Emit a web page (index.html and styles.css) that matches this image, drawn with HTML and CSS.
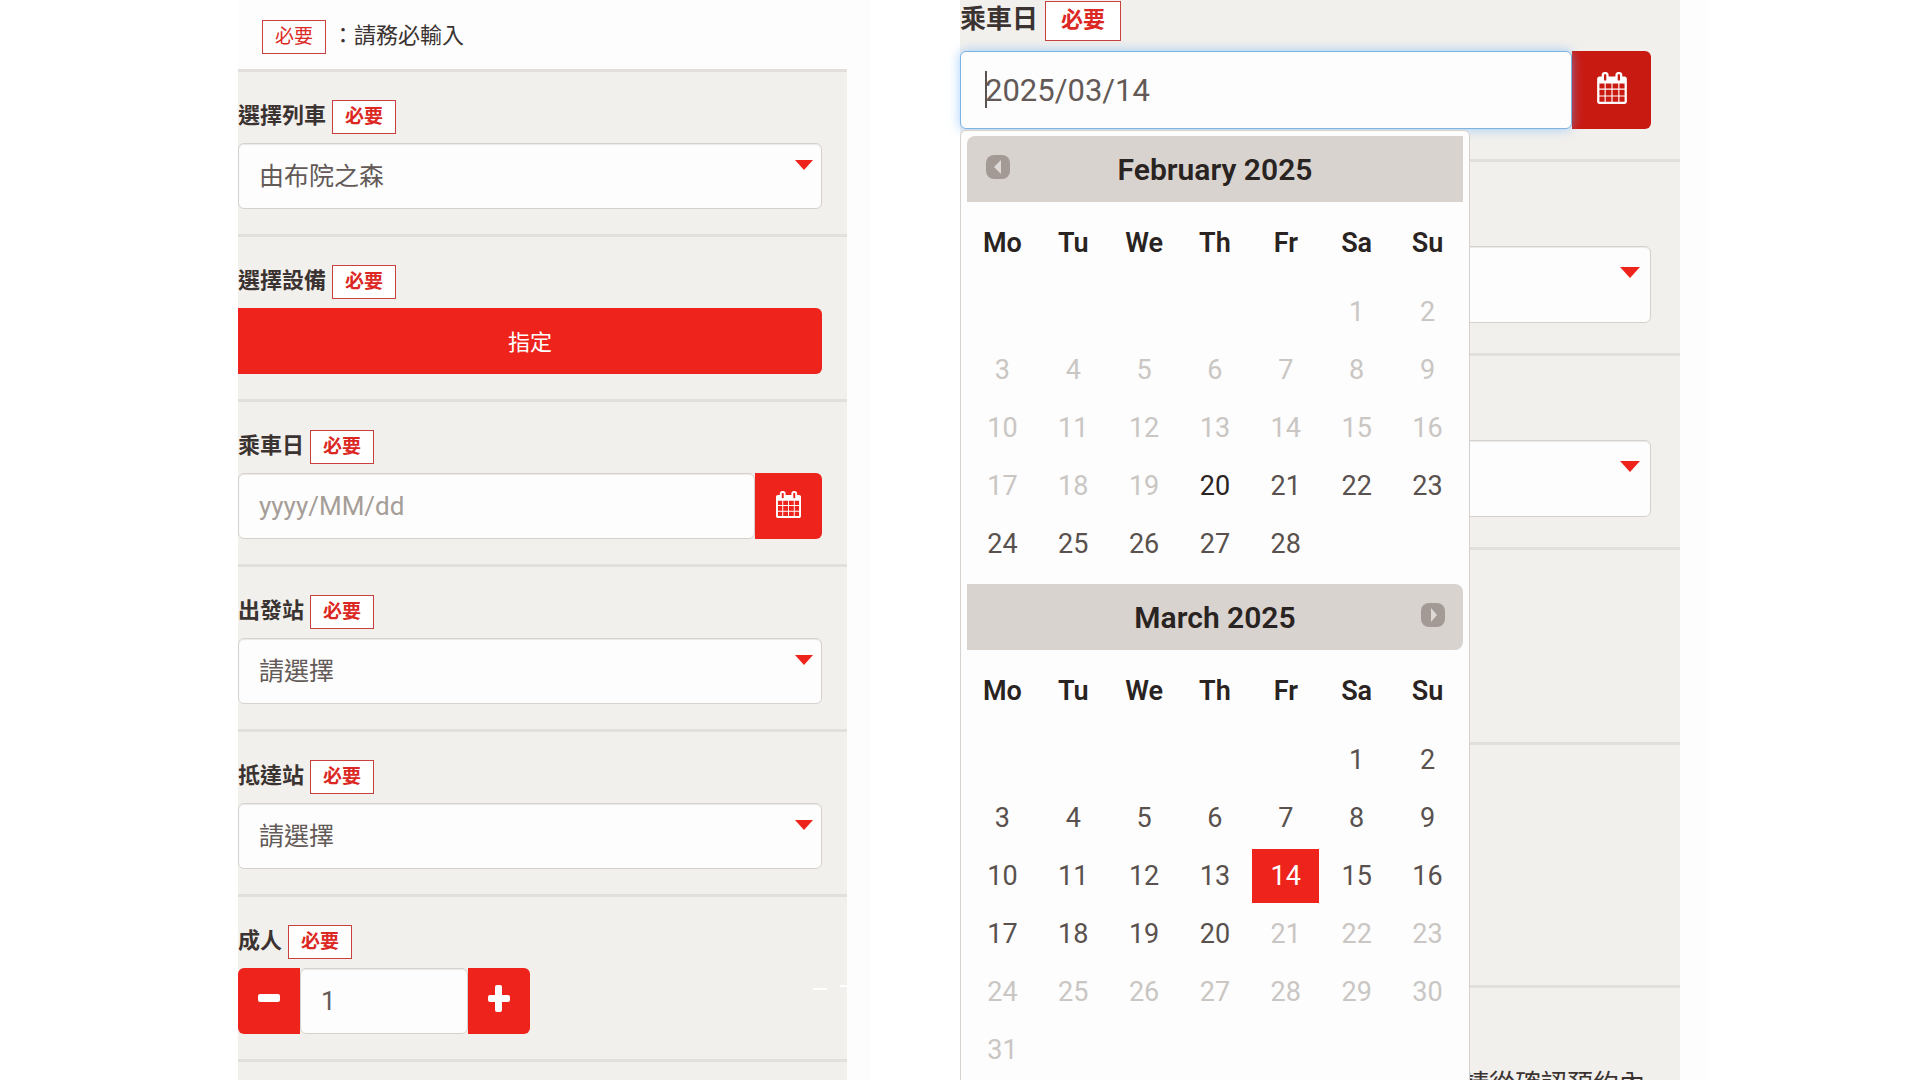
FILE: index.html
```
<!DOCTYPE html>
<html lang="zh-Hant">
<head>
<meta charset="utf-8">
<title>列車預約</title>
<link rel="stylesheet" href="styles.css">
</head>
<body>
<svg width="0" height="0" class="defs" aria-hidden="true">
  <symbol id="calendar" viewBox="64 0 1664 1792">
    <path d="M192 1664h288v-288h-288v288zm352 0h320v-288h-320v288zm-352-352h288v-320h-288v320zm352 0h320v-320h-320v320zm-352-384h288v-288h-288v288zm736 736h320v-288h-320v288zm-384-736h320v-288h-320v288zm768 736h288v-288h-288v288zm-384-352h320v-320h-320v320zm-352-864v-288q0-13-9.500-22.500t-22.500-9.500h-64q-13 0-22.500 9.500t-9.500 22.500v288q0 13 9.500 22.500t22.500 9.500h64q13 0 22.500-9.500t9.500-22.500zm736 864h288v-320h-288v320zm-384-384h320v-288h-320v288zm384 0h288v-288h-288v288zm32-480v-288q0-13-9.500-22.500t-22.500-9.500h-64q-13 0-22.500 9.500t-9.500 22.500v288q0 13 9.500 22.500t22.500 9.500h64q13 0 22.500-9.500t9.500-22.500zm384-64v1280q0 52-38 90t-90 38h-1408q-52 0-90-38t-38-90v-1280q0-52 38-90t90-38h128v-96q0-66 47-113t113-47h64q66 0 113 47t47 113v96h384v-96q0-66 47-113t113-47h64q66 0 113 47t47 113v96h128q52 0 90 38t38 90z"/>
  </symbol>
</svg>
<main class="page">
  <form class="screen screen-form">
    <p class="note"><span class="badge">必要</span><span>：請務必輸入</span></p>
    <div class="field">
      <div class="label-row"><label for="train">選擇列車</label><span class="badge">必要</span></div>
      <div class="select"><select id="train"><option>由布院之森</option></select></div>
    </div>
    <div class="field">
      <div class="label-row"><label for="seat">選擇設備</label><span class="badge">必要</span></div>
      <button type="button" id="seat" class="btn btn-wide">指定</button>
    </div>
    <div class="field">
      <div class="label-row"><label for="date">乘車日</label><span class="badge">必要</span></div>
      <div class="group">
        <input id="date" class="text" type="text" placeholder="yyyy/MM/dd">
        <button type="button" class="btn btn-date" aria-label="日曆"><svg class="icon"><use href="#calendar"/></svg></button>
      </div>
    </div>
    <div class="field">
      <div class="label-row"><label for="from">出發站</label><span class="badge">必要</span></div>
      <div class="select"><select id="from"><option>請選擇</option></select></div>
    </div>
    <div class="field">
      <div class="label-row"><label for="to">抵達站</label><span class="badge">必要</span></div>
      <div class="select"><select id="to"><option>請選擇</option></select></div>
    </div>
    <div class="field">
      <div class="label-row"><label for="adult">成人</label><span class="badge">必要</span></div>
      <div class="group stepper">
        <button type="button" class="btn btn-step btn-minus" aria-label="減少"><svg class="sign" viewBox="0 0 22 28"><rect y="10" width="22" height="8" rx="2"/></svg></button>
        <input id="adult" class="text" type="text" value="1">
        <button type="button" class="btn btn-step" aria-label="增加"><svg class="sign" viewBox="0 0 22 28"><rect y="11" width="22" height="7" rx="2"/><rect x="7" y="1" width="7" height="27" rx="2"/></svg></button>
      </div>
      <svg class="marks" viewBox="0 0 36 6" aria-hidden="true"><path d="M0 4h14v2H0zM27 1h9v2h-9z"/></svg>
    </div>
    <div class="field"></div>
  </form>

  <form class="screen screen-date">
    <div class="field first">
      <div class="label-row"><label for="ride">乘車日</label><span class="badge">必要</span></div>
      <div class="group">
        <input id="ride" class="text focused" type="text" value="2025/03/14"><span class="caret"></span>
        <button type="button" class="btn btn-date active" aria-label="日曆"><svg class="icon"><use href="#calendar"/></svg></button>
        <div class="picker">
          <div class="month-head month-first">
            <button type="button" class="nav nav-prev" aria-label="上個月"><svg viewBox="0 0 24 24"><rect width="24" height="24" rx="8"/><path d="M15 5v14L8 12z"/></svg></button>
            <span>February 2025</span>
          </div>
          <table class="month">
            <thead><tr><th>Mo</th><th>Tu</th><th>We</th><th>Th</th><th>Fr</th><th>Sa</th><th>Su</th></tr></thead>
            <tbody>
              <tr><td></td><td></td><td></td><td></td><td></td><td><span>1</span></td><td><span>2</span></td></tr>
              <tr><td><span>3</span></td><td><span>4</span></td><td><span>5</span></td><td><span>6</span></td><td><span>7</span></td><td><span>8</span></td><td><span>9</span></td></tr>
              <tr><td><span>10</span></td><td><span>11</span></td><td><span>12</span></td><td><span>13</span></td><td><span>14</span></td><td><span>15</span></td><td><span>16</span></td></tr>
              <tr><td><span>17</span></td><td><span>18</span></td><td><span>19</span></td><td><a href="#" class="today">20</a></td><td><a href="#">21</a></td><td><a href="#">22</a></td><td><a href="#">23</a></td></tr>
              <tr><td><a href="#">24</a></td><td><a href="#">25</a></td><td><a href="#">26</a></td><td><a href="#">27</a></td><td><a href="#">28</a></td><td></td><td></td></tr>
            </tbody>
          </table>
          <div class="month-head month-last">
            <span>March 2025</span>
            <button type="button" class="nav nav-next" aria-label="下個月"><svg viewBox="0 0 24 24"><rect width="24" height="24" rx="8"/><path d="M10 5v14l6-7z"/></svg></button>
          </div>
          <table class="month">
            <thead><tr><th>Mo</th><th>Tu</th><th>We</th><th>Th</th><th>Fr</th><th>Sa</th><th>Su</th></tr></thead>
            <tbody>
              <tr><td></td><td></td><td></td><td></td><td></td><td><a href="#">1</a></td><td><a href="#">2</a></td></tr>
              <tr><td><a href="#">3</a></td><td><a href="#">4</a></td><td><a href="#">5</a></td><td><a href="#">6</a></td><td><a href="#">7</a></td><td><a href="#">8</a></td><td><a href="#">9</a></td></tr>
              <tr><td><a href="#">10</a></td><td><a href="#">11</a></td><td><a href="#">12</a></td><td><a href="#">13</a></td><td><a href="#" class="selected">14</a></td><td><a href="#">15</a></td><td><a href="#">16</a></td></tr>
              <tr><td><a href="#">17</a></td><td><a href="#">18</a></td><td><a href="#">19</a></td><td><a href="#">20</a></td><td><span>21</span></td><td><span>22</span></td><td><span>23</span></td></tr>
              <tr><td><span>24</span></td><td><span>25</span></td><td><span>26</span></td><td><span>27</span></td><td><span>28</span></td><td><span>29</span></td><td><span>30</span></td></tr>
              <tr><td><span>31</span></td><td></td><td></td><td></td><td></td><td></td><td></td></tr>
            </tbody>
          </table>
        </div>
      </div>
    </div>
    <div class="field unlabeled"><div class="select"><select aria-label="出發站"></select></div></div>
    <div class="field unlabeled"><div class="select"><select aria-label="抵達站"></select></div></div>
    <div class="field short"></div>
    <div class="field tall"></div>
    <div class="field closing"><p>請從確認預約內</p></div>
  </form>
</main>
</body>
</html>
```
FILE: styles.css
```
* { box-sizing: border-box; }

body {
  margin: 0;
  background: #fff;
  color: #3b3331;
  font-family: Roboto, "Noto Sans CJK TC", sans-serif;
}

p { margin: 0; }

button, input, select { font: inherit; margin: 0; }

.defs { position: absolute; }

.page {
  display: grid;
  grid-template-columns: 238fr 632fr 90fr 748fr 212fr;
  height: 100vh;
  overflow: hidden;
}

/* Each screen sets its own scale */
.screen {
  display: flex;
  flex-direction: column;
  background: #fdfdfd;
}

.screen-form {
  --label: 22px;
  --label-line: 32px;
  --tag: 19px;
  --tag-w: 64px;
  --tag-h: 34px;
  --text: 26px;
  --option: 25px;
  --control: 66px;
  --pad: 20px;
  --side: 67px;
  grid-column: 2;
  padding-right: 23px;
}

.screen-date {
  --label: 26px;
  --label-line: 36px;
  --tag: 22px;
  --tag-w: 76px;
  --tag-h: 40px;
  --text: 31px;
  --option: 30px;
  --control: 77px;
  --pad: 24px;
  --side: 79px;
  grid-column: 4;
  padding-right: 28px;
}

.note {
  display: flex;
  gap: 6px;
  height: 69px;
  padding: 20px 0 0 24px;
  font-size: var(--label);
  line-height: var(--label-line);
}

.badge {
  display: flex;
  align-items: center;
  justify-content: center;
  width: var(--tag-w);
  height: var(--tag-h);
  padding-bottom: 2px;
  border: 1px solid #c9403c;
  background: #fff;
  color: #dc2823;
  font-size: var(--tag);
  line-height: 1;
}

.note .badge { background: #fdfdfd; }

.field {
  position: relative;
  flex: none;
  padding: 28px 25px 25px 0;
  border-top: 3px solid #e2dfdc;
  background: #f2f0ec;
}

.field:last-child { flex: 1; }

.label-row {
  display: flex;
  gap: 6px;
  height: 43px;
  font-size: var(--label);
  font-weight: 700;
  line-height: var(--label-line);
}

.select, .group {
  position: relative;
  display: flex;
}

.select::after {
  content: "";
  position: absolute;
  top: 17px;
  right: 9px;
  border: 9px solid transparent;
  border-top: 10px solid #ee231c;
  border-bottom: 0;
}

select, .text {
  width: 100%;
  min-width: 0;
  height: var(--control);
  padding: 0 var(--pad);
  border: 1px solid #d6d1cd;
  border-radius: 6px;
  outline: 0;
  background: #fdfdfd;
  box-shadow: inset 0 1px 1px rgba(0, 0, 0, .08);
  color: #635a57;
  font-size: var(--option);
  appearance: none;
}

.text {
  flex: 1;
  font-size: var(--text);
}

.text::placeholder { color: #a59d98; opacity: 1; }

.btn {
  display: flex;
  align-items: center;
  justify-content: center;
  flex: none;
  height: var(--control);
  padding: 0;
  border: 0;
  background: #ee241c;
  color: #fff;
}

.btn-wide {
  width: 100%;
  padding-bottom: 3px;
  border-radius: 0 6px 6px 0;
  font-size: var(--label);
}

.btn-date {
  width: var(--side);
  border-radius: 0 6px 6px 0;
}

.icon { width: 25px; height: 27px; fill: #fff; margin-bottom: 4px; }

.stepper { width: 292px; }

.btn-step { width: 62px; border-radius: 0 6px 6px 0; }

.btn-minus { border-radius: 6px 0 0 6px; }

.sign { width: 22px; height: 28px; margin-bottom: 6px; fill: #fff; }

.marks {
  position: absolute;
  right: -2px;
  bottom: 69px;
  width: 36px;
  height: 6px;
  fill: #fff;
}

/* Date screen */
.screen-date .field { padding: 84px 29px 30px 0; }

.screen-date .first {
  z-index: 1;
  padding-top: 1px;
  border-top: 0;
}

.screen-date .label-row {
  gap: 7px;
  height: 50px;
}

.screen-date .field.short { padding: 192px 0 0; }

.screen-date .field.tall { padding: 240px 0 0; }

.screen-date .field.closing {
  padding: 78px 35px 0 0;
  font-size: var(--label);
  line-height: 36px;
  text-align: right;
}

.screen-date .group { height: 78px; }

.screen-date .group .text, .screen-date .group .btn-date { height: 78px; }

.screen-date .select::after {
  top: 21px;
  right: 11px;
  border-width: 11px 10px 0;
}

.text.focused {
  position: relative;
  z-index: 1;
  border-color: #7db3e0;
  box-shadow: 0 0 12px rgba(102, 175, 255, .6);
}

.caret {
  position: absolute;
  z-index: 2;
  top: 20px;
  left: 25px;
  width: 2px;
  height: 37px;
  background: #5a5350;
}

.btn-date.active { background: #c91a12; }

.screen-date .icon { width: 30px; height: 32px; }

.picker {
  position: absolute;
  z-index: 3;
  top: 79px;
  left: 0;
  width: 510px;
  padding: 5px 6px;
  border: 1px solid #d6d1cd;
  border-radius: 6px;
  background: #fdfdfd;
}

.month-head {
  position: relative;
  display: flex;
  align-items: center;
  justify-content: center;
  height: 66px;
  background: #d9d3cf;
  color: #292321;
  font-size: 30px;
  font-weight: 600;
}

.month-first { border-radius: 8px 0 0 0; }

.month-last { margin-top: 11px; border-radius: 0 8px 8px 0; }

.nav {
  position: absolute;
  top: 19px;
  width: 24px;
  height: 24px;
  padding: 0;
  border: 0;
  background: none;
}

.nav svg { display: block; width: 24px; height: 24px; fill: #a39a96; }

.nav path { fill: #ded9d6; }

.nav-prev { left: 19px; }

.nav-next { right: 18px; }

.month {
  width: 100%;
  table-layout: fixed;
  border-collapse: collapse;
  font-size: 27px;
  text-align: center;
}

.month th {
  height: 81px;
  padding: 0;
  color: #292321;
  font-weight: 600;
}

.month td { height: 58px; padding: 2px; }

.month td span, .month td a {
  display: block;
  line-height: 54px;
  color: #c9c6c3;
  text-decoration: none;
}

.month td a { color: #59514e; }

.month td .today { color: #292321; }

.month td .selected { background: #ee241c; color: #fff; }
```
